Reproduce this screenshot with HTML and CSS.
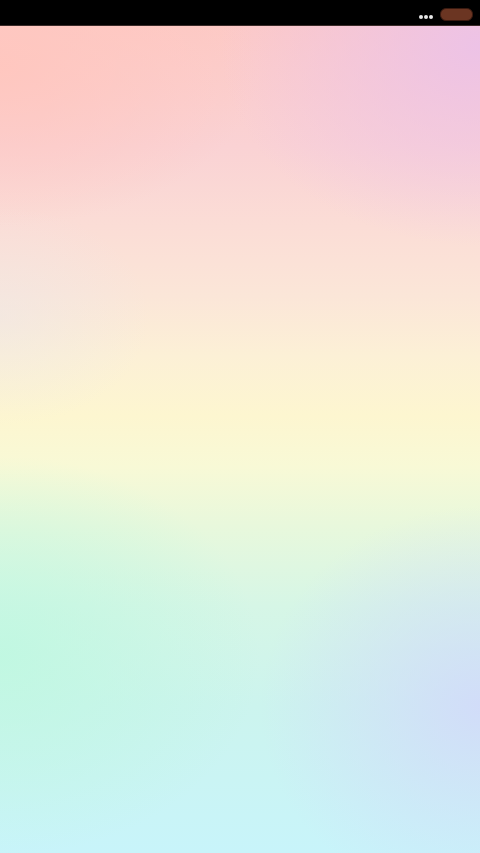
FILE: index.html
```html
<!DOCTYPE html>
<html>
<head>
<meta charset="utf-8">
<link rel="stylesheet" href="styles.css">
</head>
<body>
<div class="screen">
  <div class="topbar">
    <div class="dots"><span></span><span></span><span></span></div>
    <div class="pill"></div>
  </div>
  <div class="canvas"></div>
</div>
</body>
</html>
```
FILE: styles.css
```css
html, body {
  margin: 0;
  padding: 0;
  width: 480px;
  height: 853px;
  overflow: hidden;
  font-family: "Liberation Sans", sans-serif;
}
.screen {
  display: flex;
  flex-direction: column;
  width: 480px;
  height: 853px;
}
.topbar {
  height: 26px;
  background: #000;
  display: flex;
  align-items: flex-start;
  justify-content: flex-end;
  padding-right: 7px;
  box-sizing: border-box;
  border-bottom: 1px solid #3a2a28;
}
.dots {
  display: flex;
  gap: 1px;
  margin-top: 15px;
  margin-right: 7px;
}
.dots span {
  width: 4px;
  height: 4px;
  border-radius: 50%;
  background: #e8e8e8;
}
.pill {
  width: 31px;
  height: 11px;
  margin-top: 8px;
  border-radius: 6px;
  background: #6b3522;
  border: 1px solid #3a1a10;
}
.canvas {
  flex: 1;
  background:
    radial-gradient(ellipse 220px 200px at 480px 680px, rgba(210,218,250,0.9), rgba(210,218,250,0)),
    radial-gradient(ellipse 260px 200px at 0px 630px, rgba(190,248,224,0.85), rgba(190,248,224,0)),
    radial-gradient(ellipse 150px 110px at 0px 290px, rgba(234,230,234,0.45), rgba(234,230,234,0)),
    radial-gradient(ellipse 260px 200px at 480px 20px, rgba(236,194,232,0.95), rgba(236,194,232,0)),
    radial-gradient(ellipse 260px 160px at 0px 40px, rgba(255,198,190,0.9), rgba(255,198,190,0)),
    linear-gradient(180deg,
      #fdcac6 0px,
      #fad2d4 120px,
      #fbddd6 200px,
      #fbe6d8 270px,
      #fcf0d6 330px,
      #fdf6d0 390px,
      #f8f9d6 440px,
      #e8f8dc 500px,
      #d6f6e6 580px,
      #ccf4ee 680px,
      #c8f4fa 827px);
}
```
